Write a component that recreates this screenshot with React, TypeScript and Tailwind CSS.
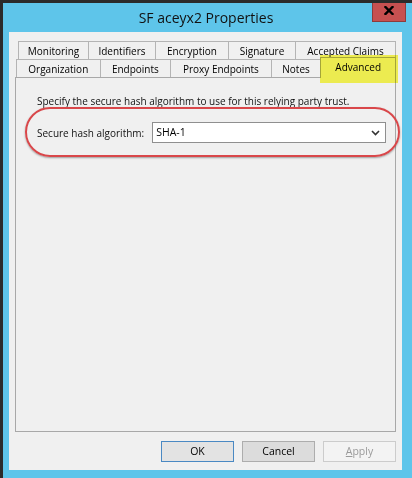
import React from 'react';

const font = { fontFamily: '"Segoe UI", "Open Sans", "Liberation Sans", sans-serif' };

const backRow = [
  { label: 'Monitoring', w: 'w-[70px]' },
  { label: 'Identifiers', w: 'w-[67px]' },
  { label: 'Encryption', w: 'w-[73px]' },
  { label: 'Signature', w: 'w-[67px]' },
  { label: 'Accepted Claims', w: 'w-[101px]' },
];

const frontRow = [
  { label: 'Organization', w: 'w-[84px]' },
  { label: 'Endpoints', w: 'w-[71px]' },
  { label: 'Proxy Endpoints', w: 'w-[101px]' },
  { label: 'Notes', w: 'w-[50px]' },
];

function Tab({ label, w, last }: { label: string; w: string; last?: boolean }) {
  return (
    <div
      className={`${w} h-[18px] flex items-center justify-center border-t border-l border-[#b4b4b4] bg-[#f0f0f0] text-[10px] text-black leading-none whitespace-nowrap ${last ? 'border-r' : ''}`}
    >
      {label}
    </div>
  );
}

function Button({ children, variant }: { children: React.ReactNode; variant: 'default' | 'normal' | 'disabled' }) {
  const styles = {
    default: 'border-[#4a89c3] bg-[#e3e3e3] text-black',
    normal: 'border-[#adadad] bg-[#dcdcdc] text-black',
    disabled: 'border-[#cccccc] bg-[#f3f3f3] text-[#9a9a9a]',
  };
  return (
    <div className={`w-[73px] h-[21px] border flex items-center justify-center text-[10.5px] leading-none ${styles[variant]}`}>
      {children}
    </div>
  );
}

export default function App() {
  return (
    <div className="relative w-[412px] h-[478px] overflow-hidden bg-[#5ec5ea] border-t-[3px] border-l-[3px] border-[#2b2b2b] flex flex-col" style={font}>
      {/* title bar */}
      <div className="h-[29px] flex items-center justify-center pr-[3px]">
        <span className="text-[14px] text-[#111] leading-none">SF aceyx2 Properties</span>
      </div>
      <div className="absolute top-[-3px] right-[6px] w-[34px] h-[22px] bg-[#c75050] border border-[#8e3b3b] border-t-0 flex items-center justify-center">
        <svg width="10" height="9" viewBox="0 0 10 9">
          <path d="M1.5 1 L8.5 8 M8.5 1 L1.5 8" stroke="#000" strokeWidth="2.4" strokeLinecap="square" />
        </svg>
      </div>

      {/* client area */}
      <div className="ml-[6px] mr-[10px] h-[438px] bg-[#f0f0f0] flex flex-col px-[6px] pt-[9px] pb-[8px]">
        <div className="flex flex-col">
          <div className="flex ml-[3px]">
            {backRow.map((t, i) => (
              <Tab key={t.label} label={t.label} w={t.w} last={i === backRow.length - 1} />
            ))}
          </div>
          <div className="flex ml-[1px] items-end h-[18px]">
            {frontRow.map((t) => (
              <Tab key={t.label} label={t.label} w={t.w} />
            ))}
            <div className="relative w-[76px] h-[21px] mb-[-1px] flex items-start justify-center pt-[4px] border-t border-l border-r border-[#a8a8a8] bg-[#f0f0f0] text-[10px] text-black leading-none">
              Advanced
            </div>
          </div>
        </div>

        <div className="flex-1 border border-[#a8a8a8] bg-[#f0f0f0] pl-[21px] pt-[16px]">
          <p className="text-[10px] text-[#111] leading-[14px] whitespace-nowrap">
            Specify the secure hash algorithm to use for this relying party trust.
          </p>
          <div className="mt-[14px] flex items-center gap-[8px]">
            <span className="text-[10px] text-[#111] leading-none whitespace-nowrap">Secure hash algorithm:</span>
            <div className="shrink-0 w-[234px] h-[21px] bg-white border border-[#8f8f8f] flex items-center justify-between pl-[3px] pr-[5px]">
              <span className="text-[10.5px] text-black leading-none">SHA-1</span>
              <svg width="9" height="6" viewBox="0 0 9 6">
                <path d="M1 1 L4.5 4.5 L8 1" stroke="#333" strokeWidth="1.6" fill="none" />
              </svg>
            </div>
          </div>
        </div>

        <div className="mt-[9px] flex justify-end gap-[8px]">
          <Button variant="default">OK</Button>
          <Button variant="normal">Cancel</Button>
          <Button variant="disabled">
            <span><span className="underline">A</span>pply</span>
          </Button>
        </div>
      </div>

      {/* annotations */}
      <div className="absolute z-20 left-[317px] top-[52px] w-[78px] h-[28px] bg-[#fbfa55] mix-blend-multiply" />
      <div className="absolute z-20 left-[22px] top-[104px] w-[375px] h-[50px] rounded-[26px] border-[2.5px] border-[#d9474a] shadow-[0_1px_2px_rgba(0,0,0,0.35)]" />
    </div>
  );
}
